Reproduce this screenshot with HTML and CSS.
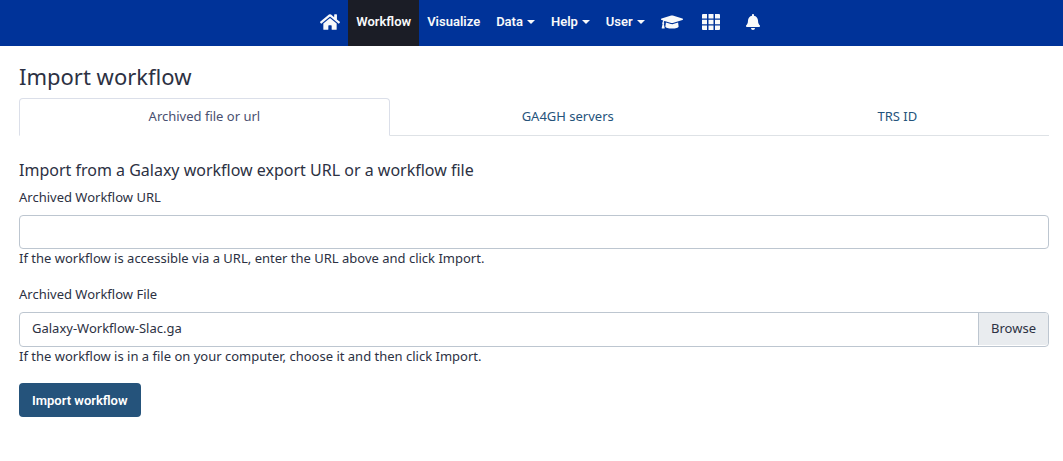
FILE: index.html
```html
<!DOCTYPE html>
<html lang="en">
<head>
<meta charset="utf-8">
<meta name="viewport" content="width=device-width, initial-scale=1">
<title>Import workflow</title>
<link rel="stylesheet" href="styles.css">
</head>
<body>
<nav class="masthead" aria-label="Main">
  <a class="nav-item" href="#home" aria-label="Home"><svg class="icon icon-home" viewBox="0 0 576 512"><path d="M280.37 148.26L96 300.11V464a16 16 0 0 0 16 16l112.06-.29a16 16 0 0 0 15.92-16V368a16 16 0 0 1 16-16h64a16 16 0 0 1 16 16v95.64a16 16 0 0 0 16 16.05L464 480a16 16 0 0 0 16-16V300L295.67 148.26a12.19 12.19 0 0 0-15.3 0zM571.6 251.47L488 182.56V44.05a12 12 0 0 0-12-12h-56a12 12 0 0 0-12 12v72.61L318.47 43a48 48 0 0 0-61 0L4.34 251.47a12 12 0 0 0-1.6 16.9l25.5 31A12 12 0 0 0 45.15 301l235.22-193.74a12.19 12.19 0 0 1 15.3 0L530.9 301a12 12 0 0 0 16.9-1.6l25.5-31a12 12 0 0 0-1.7-16.93z"/></svg></a>
  <a class="nav-item active" href="#workflow" aria-current="page">Workflow</a>
  <a class="nav-item" href="#visualize">Visualize</a>
  <button class="nav-item" type="button">Data<span class="caret"></span></button>
  <button class="nav-item" type="button">Help<span class="caret"></span></button>
  <button class="nav-item" type="button">User<span class="caret"></span></button>
  <a class="nav-item" href="#tutorials" aria-label="Tutorials"><svg class="icon icon-cap" viewBox="0 0 640 512"><path d="M622.34 153.2L343.4 67.5c-15.2-4.67-31.6-4.67-46.79 0L17.66 153.2c-23.54 7.23-23.54 38.36 0 45.59l48.63 14.94c-10.67 13.19-17.23 29.28-17.88 46.9C38.78 266.15 32 276.11 32 288c0 10.78 5.68 19.85 13.86 25.65L20.33 428.53C18.11 438.52 25.71 448 35.94 448h56.11c10.24 0 17.84-9.48 15.62-19.47L82.14 313.65C90.32 307.85 96 298.78 96 288c0-11.57-6.47-21.25-15.66-26.87.76-15.02 8.44-28.3 20.69-36.72L296.6 284.5c9.06 2.78 26.44 6.25 46.79 0l278.95-85.7c23.55-7.24 23.55-38.36 0-45.6zM352.79 315.09c-28.53 8.76-52.84 3.92-65.59 0l-145.02-44.55L128 384c0 35.35 85.96 64 192 64s192-28.65 192-64l-14.18-113.47-145.03 44.56z"/></svg></a>
  <button class="nav-item nav-grid" type="button" aria-label="Scratchbook"><svg class="icon icon-grid" viewBox="0 0 18 16"><path d="M1 0h4v4.500h-5v-3.500q0-1 1-1zM6.500 0h5v4.500h-5zM13 0h4q1 0 1 1v3.500h-5zM0 5.750h5v4.500h-5zM6.500 5.750h5v4.500h-5zM13 5.750h5v4.500h-5zM0 11.500h5v4.500h-4q-1 0-1-1zM6.500 11.500h5v4.500h-5zM13 11.500h5v3.500q0 1-1 1h-4z"/></svg></button>
  <a class="nav-item nav-bell" href="#notifications" aria-label="Notifications"><svg class="icon icon-bell" viewBox="0 0 448 512"><path d="M224 512c35.32 0 63.97-28.65 63.97-64H160.03c0 35.35 28.65 64 63.97 64zm215.39-149.71c-19.32-20.76-55.47-51.99-55.47-154.29 0-77.7-54.48-139.9-127.94-155.16V32c0-17.67-14.32-32-31.98-32s-31.98 14.33-31.98 32v20.84C118.56 68.1 64.08 130.3 64.08 208c0 102.3-36.15 133.53-55.47 154.29-6 6.45-8.66 14.16-8.61 21.71.11 16.4 12.98 32 32.1 32h383.8c19.12 0 32-15.6 32.1-32 .05-7.55-2.61-15.27-8.61-21.71z"/></svg></a>
</nav>
<main class="page">
  <h1 class="title">Import workflow</h1>
  <div class="tabs" role="tablist">
    <a class="tab selected" role="tab" aria-selected="true" href="#archive">Archived file or url</a>
    <a class="tab" role="tab" aria-selected="false" href="#ga4gh">GA4GH servers</a>
    <a class="tab" role="tab" aria-selected="false" href="#trs">TRS ID</a>
  </div>
  <form class="import-form">
    <h2 class="subtitle">Import from a Galaxy workflow export URL or a workflow file</h2>
    <div class="field">
      <label class="label" for="url">Archived Workflow URL</label>
      <input class="text-input" id="url" type="text">
      <p class="hint">If the workflow is accessible via a URL, enter the URL above and click Import.</p>
    </div>
    <div class="field">
      <label class="label" for="file">Archived Workflow File</label>
      <div class="file-box">
        <span class="file-name">Galaxy-Workflow-Slac.ga</span>
        <span class="browse">Browse</span>
        <input class="file-input" id="file" type="file">
      </div>
      <p class="hint">If the workflow is in a file on your computer, choose it and then click Import.</p>
    </div>
    <button class="submit" type="submit">Import workflow</button>
  </form>
</main>
</body>
</html>
```
FILE: styles.css
```css
* { box-sizing: border-box; }

body {
  margin: 0;
  background: #fff;
  color: #2c3143;
  font-family: "Noto Sans", sans-serif;
  font-size: 13px;
  line-height: 19px;
}

.masthead {
  display: flex;
  justify-content: center;
  height: 46px;
  padding-left: 17px;
  background: #003399;
}

.nav-item {
  display: flex;
  align-items: center;
  padding: 0 8px 3px;
  border: 0;
  background: none;
  color: #f8f9fa;
  font: inherit;
  font-family: Roboto, sans-serif;
  font-weight: 600;
  text-decoration: none;
}

.nav-item.active { background: #1b1d26; }

.caret {
  margin-left: 4px;
  border: 4px solid transparent;
  border-top-color: currentColor;
  border-bottom: 0;
}

.icon { display: block; height: 18px; fill: currentColor; }
.icon-home { width: 20px; }
.icon-cap { width: 22px; }
.icon-grid { width: 18px; height: 16px; }
.icon-bell { width: 14px; height: 16px; }
.nav-grid { padding-left: 11px; }
.nav-bell { padding-left: 18px; }

.page { padding: 16px 14px 16px 19px; }

.title {
  margin: 0 0 8px;
  font-size: 22px;
  font-weight: 400;
  line-height: 28px;
}

.tabs { display: flex; border-bottom: 1px solid #dee2e6; }

.tab {
  flex: 1 1 auto;
  margin-bottom: -1px;
  padding: 8px 13px 9px;
  border: 1px solid transparent;
  border-radius: 4px 4px 0 0;
  color: #25537b;
  text-align: center;
  text-decoration: none;
}

.tab.selected {
  flex: 0 0 36%;
  border-color: #dbdfe9;
  border-bottom-color: #fff;
  background: #fff;
  color: #495070;
}

.import-form { padding-top: 24px; }

.subtitle {
  margin: 0 0 8px;
  font-size: 16px;
  font-weight: 400;
  line-height: 20px;
}

.field { margin-bottom: 17px; }
.label { display: block; margin-bottom: 8px; }
.hint { margin: 0; }

.text-input {
  display: block;
  width: 100%;
  height: 34px;
  padding: 6px 12px;
  border: 1px solid #bdc6d0;
  border-radius: 4px;
  color: inherit;
  font: inherit;
}

.file-box {
  position: relative;
  display: flex;
  height: 35px;
  border: 1px solid #bdc6d0;
  border-radius: 4px;
}

.file-name { flex: 1; padding: 6px 12px; }

.browse {
  margin-bottom: 1px;
  padding: 6px 12px;
  border-left: 1px solid #bdc6d0;
  border-radius: 0 3px 3px 0;
  background: #e9ecef;
}

.file-input {
  position: absolute;
  inset: 0;
  width: 100%;
  opacity: 0;
}

.submit {
  height: 34px;
  padding: 0 13px;
  border: 0;
  border-radius: 4px;
  background: #25537b;
  color: #fff;
  font: inherit;
  font-family: Roboto, sans-serif;
  font-weight: 600;
}
```
